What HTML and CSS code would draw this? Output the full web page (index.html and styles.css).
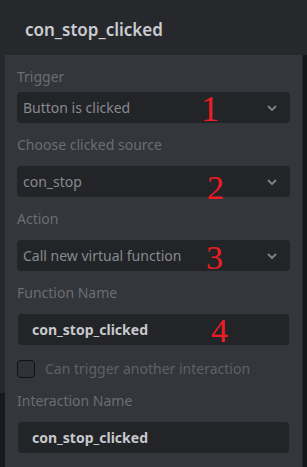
FILE: index.html
```html
<!DOCTYPE html>
<html lang="en">
<head>
    <meta charset="UTF-8">
    <meta name="viewport" content="width=device-width, initial-scale=1.0">
    <title>con_stop_clicked</title>
    <link rel="stylesheet" href="styles.css">
</head>
<body>
    <div class="dialog">
        <div class="header">
            <h1 class="title">con_stop_clicked</h1>
        </div>

        <div class="dialog-body">
            <div class="gutter"></div>

            <div class="panel">
                <div class="field">
                    <label class="field-label">Trigger</label>
                    <div class="select">
                        <span class="select-value">Button is clicked</span>
                        <svg class="chevron" viewBox="0 0 10 6">
                            <polyline points="1,1 5,5 9,1" fill="none" stroke="currentColor" stroke-width="2"/>
                        </svg>
                    </div>
                </div>

                <div class="field">
                    <label class="field-label">Choose clicked source</label>
                    <div class="select">
                        <span class="select-value">con_stop</span>
                        <svg class="chevron" viewBox="0 0 10 6">
                            <polyline points="1,1 5,5 9,1" fill="none" stroke="currentColor" stroke-width="2"/>
                        </svg>
                    </div>
                </div>

                <div class="field">
                    <label class="field-label">Action</label>
                    <div class="select">
                        <span class="select-value">Call new virtual function</span>
                        <svg class="chevron" viewBox="0 0 10 6">
                            <polyline points="1,1 5,5 9,1" fill="none" stroke="currentColor" stroke-width="2"/>
                        </svg>
                    </div>
                </div>

                <div class="field">
                    <label class="field-label">Function Name</label>
                    <div class="text-input">con_stop_clicked</div>
                </div>

                <div class="check-row">
                    <span class="checkbox"></span>
                    <span class="check-label">Can trigger another interaction</span>
                </div>

                <div class="field">
                    <label class="field-label">Interaction Name</label>
                    <div class="text-input">con_stop_clicked</div>
                </div>
            </div>

            <div class="edge"></div>
        </div>

        <!-- hand-drawn annotation numbers -->
        <span class="mark mark-1">1</span>
        <span class="mark mark-2">2</span>
        <span class="mark mark-3">3</span>
        <span class="mark mark-4">4</span>
    </div>
</body>
</html>
```

FILE: styles.css
```css
* {
    box-sizing: border-box;
}

body {
    margin: 0;
    background-color: #141517;
    font-family: "Noto Sans", "Open Sans", sans-serif;
}

.dialog {
    position: relative;
    width: 307px;
    height: 467px;
    display: flex;
    flex-direction: column;
    background-color: #27282c;
    overflow: hidden;
}

.header {
    height: 55px;
    flex-shrink: 0;
    display: flex;
    align-items: center;
    padding: 4px 25px 0;
}

.title {
    margin: 0;
    font-size: 17px;
    font-weight: 600;
    color: #c9ccd1;
}

.dialog-body {
    flex: 1;
    display: flex;
}

.gutter {
    width: 5px;
    background: linear-gradient(#27282c 338px, #18191c 338px);
}

.edge {
    width: 5px;
    border-left: 1px solid #26272b;
    background-color: #141517;
}

.panel {
    flex: 1;
    background-color: #33363b;
    padding: 12px 12px 0;
}

.field + .field {
    margin-top: 12px;
}

.field-label {
    display: block;
    height: 20px;
    line-height: 20px;
    margin-bottom: 11px;
    font-size: 14px;
    color: #6b6e73;
}

.field:first-child .field-label {
    margin-bottom: 5px;
}

.select {
    height: 31px;
    display: flex;
    align-items: center;
    justify-content: space-between;
    padding: 0 13px 0 6px;
    background-color: #232428;
    border-radius: 4px;
}

.select-value {
    font-size: 14px;
    color: #878a8f;
}

.chevron {
    width: 10px;
    height: 6px;
    color: #7c7f84;
}

.text-input {
    height: 31px;
    margin: 0 1px;
    display: flex;
    align-items: center;
    padding: 0 14px;
    background-color: #232428;
    border-radius: 4px;
    font-size: 14px;
    font-weight: 700;
    color: #c6c9cd;
}

.check-row {
    display: flex;
    align-items: center;
    gap: 10px;
    margin: 14px 0 13px;
}

.checkbox {
    width: 18px;
    height: 18px;
    border: 1.5px solid #101113;
    border-radius: 4px;
    background-color: #2f3236;
}

.check-label {
    font-size: 14px;
    color: #5f6267;
}

.mark {
    position: absolute;
    font-family: "Liberation Serif", "Times New Roman", serif;
    font-size: 34px;
    line-height: 1;
    color: #ee1c25;
}

.mark-1 { left: 201px; top: 91px; font-size: 36px; }
.mark-2 { left: 207px; top: 171px; }
.mark-3 { left: 206px; top: 241px; }
.mark-4 { left: 211px; top: 314px; }
```
